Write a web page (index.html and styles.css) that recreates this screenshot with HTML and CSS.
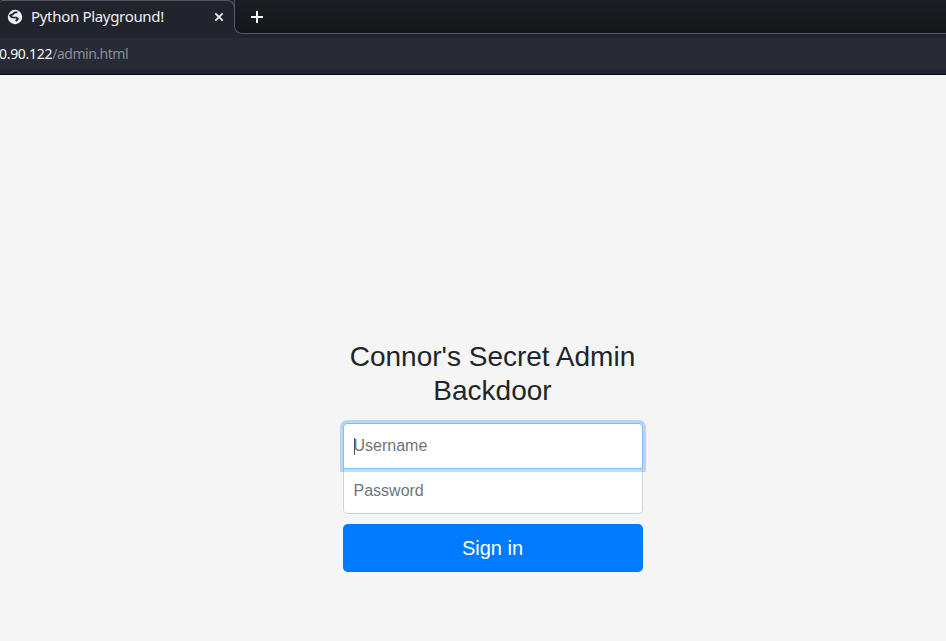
FILE: index.html
```html
<!DOCTYPE html>
<html lang="en">
<head>
<meta charset="utf-8">
<title>Python Playground!</title>
<link rel="stylesheet" href="styles.css">
</head>
<body>
<header class="browser">
  <div class="tabs">
    <div class="tab">
      <svg class="globe" width="16" height="16" viewBox="0 0 16 16"><circle cx="8" cy="8" r="7.2" fill="#f0f0ef"/><path d="M10.4 3.4H7.6L6 5.2 3 6.6 5.2 8.4 9.4 8.6 10.8 9.8 8.8 12.2" fill="none" stroke="#22242d" stroke-width="1.9" stroke-linejoin="round"/></svg>
      <span class="tab-title">Python Playground!</span>
      <svg class="close" width="10" height="10" viewBox="0 0 10 10"><path d="M1.3 1.3l7.4 7.4M8.7 1.3 1.3 8.7" stroke="#eeeeec" stroke-width="1.8"/></svg>
    </div>
    <div class="strip">
      <svg width="12" height="12" viewBox="0 0 12 12"><path d="M6 0v12M0 6h12" stroke="#f4f4f2" stroke-width="2"/></svg>
    </div>
  </div>
  <div class="address"><span class="host">0.90.122</span><span class="path">/admin.html</span></div>
</header>
<main>
  <form class="signin">
    <h1>Connor's Secret Admin Backdoor</h1>
    <div class="field focused"><span class="caret"></span>Username</div>
    <div class="field last">Password</div>
    <button type="button">Sign in</button>
  </form>
</main>
</body>
</html>
```
FILE: styles.css
```css
* { box-sizing: border-box; }
body {
  margin: 0;
  height: 641px;
  overflow: hidden;
  background: #f5f5f5;
  color: #212529;
  font: 16px/1.5 "Liberation Sans", sans-serif;
}
.browser {
  height: 75px;
  background: #22242d;
  border-bottom: 1px solid #08090b;
  padding-bottom: 4px;
  font-family: "Noto Sans", sans-serif;
}
.tabs { display: flex; height: 38px; background: #22242d; }
.tab {
  display: flex;
  align-items: center;
  width: 234px;
  height: 34px;
  padding: 0 10px 0 7px;
  background: #22242d;
  position: relative;
}
.tab::before {
  content: "";
  position: absolute;
  inset: 0 -1px 8px 0;
  border: 1px solid #555961;
  border-width: 1px 1px 0 0;
  border-radius: 3px 8px 0 0;
}
.tab-title {
  margin: 0 auto 2px 8px;
  color: #eeeeec;
  font-size: 15px;
  letter-spacing: -0.32px;
  line-height: 20px;
  white-space: nowrap;
}
.strip {
  flex: 1;
  height: 34px;
  padding: 11px 0 0 16px;
  line-height: 0;
  background: linear-gradient(#1c1d23, #15161a);
  border: 1px solid #555961;
  border-width: 0 0 1px 1px;
  border-radius: 0 0 0 8px;
}
.tab::after {
  content: "";
  position: absolute;
  right: -9px;
  top: 0;
  width: 9px;
  height: 9px;
  background: radial-gradient(circle at 0 100%, transparent 8.5px, #1c1d23 9px);
}
.address {
  height: 32px;
  background: #282a36;
  font-size: 14px;
  letter-spacing: -0.3px;
  line-height: 32px;
  text-indent: -1px;
  white-space: nowrap;
}
.host { color: #f8f8f2; }
.path { color: #8b8c91; letter-spacing: -0.48px; }
.signin { width: 300px; margin: 265px 0 0 342.5px; }
h1 {
  margin: 0 0 15px;
  font-size: 28px;
  font-weight: 400;
  line-height: 34px;
  text-align: center;
}
.field {
  position: relative;
  height: 46px;
  padding: 10px;
  background: #fff;
  border: 1px solid #ced4da;
  color: #6c757d;
  line-height: 24px;
}
.focused {
  z-index: 1;
  border-color: #80bdff;
  border-radius: 4px 4px 0 0;
  box-shadow: 0 0 0 3px rgba(0, 123, 255, .25);
}
.last { margin: -1px 0 10px; border-radius: 0 0 4px 4px; }
.caret {
  position: absolute;
  left: 10px;
  top: 14px;
  width: 1px;
  height: 17px;
  background: #495057;
}
button {
  display: block;
  width: 100%;
  height: 48px;
  padding: 0;
  border: 0;
  border-radius: 4.8px;
  background: #007bff;
  color: #fff;
  font: 20px/30px "Liberation Sans", sans-serif;
}
main { display: flow-root; }
```
